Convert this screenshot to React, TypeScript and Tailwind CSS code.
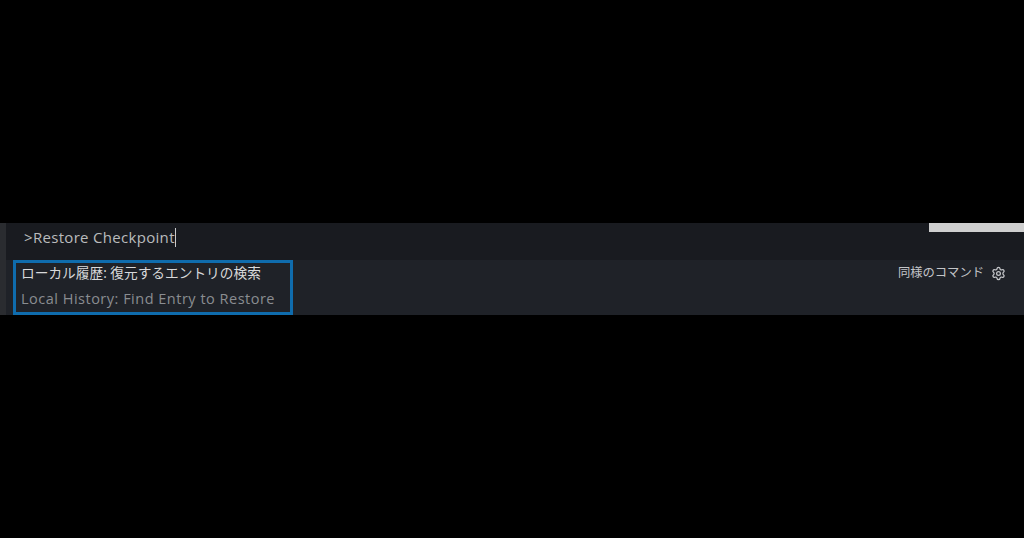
import { Settings } from "lucide-react";

const font = { fontFamily: '"Open Sans", "Noto Sans CJK JP", sans-serif' };

export default function App() {
  return (
    <div className="h-[538px] w-[1024px] overflow-hidden bg-black pt-[223px]" style={font}>
      <div className="flex h-[92px] w-full">
        <div className="w-[6px] bg-[#2a2c30]" />
        <div className="flex min-w-0 flex-1 flex-col bg-[#191b20]">
          <div className="flex h-[37px] items-start justify-between">
            <div className="flex items-center pl-[18px] pt-[4px] text-[15px] leading-[20px] tracking-[0.31px] text-[#b9bbbd]">
              <span>&gt;Restore Checkpoint</span>
              <span className="h-[19px] w-px bg-[#c8cacc]" />
            </div>
            <div className="h-[9px] w-[95px] bg-[#cfcfcf]" />
          </div>
          <div className="flex h-[55px] items-start justify-between bg-[#1f2228] pr-[18px]">
            <div className="ml-[7px] flex h-[55px] w-[280px] flex-col border-[3px] border-[#0f6cad] pl-[5px]">
              <div className="text-[13.7px] leading-[20px] text-[#d8d9db]">ローカル履歴: 復元するエントリの検索</div>
              <div className="mt-[5px] text-[14.5px] leading-[22px] tracking-[0.5px] text-[#8a8d91]">Local History: Find Entry to Restore</div>
            </div>
            <div className="flex h-[26px] items-center gap-[7px] text-[12.3px] text-[#c3c5c8]">
              <span>同様のコマンド</span>
              <Settings size={15} strokeWidth={2} className="text-[#c3c5c8]" />
            </div>
          </div>
        </div>
      </div>
    </div>
  );
}
